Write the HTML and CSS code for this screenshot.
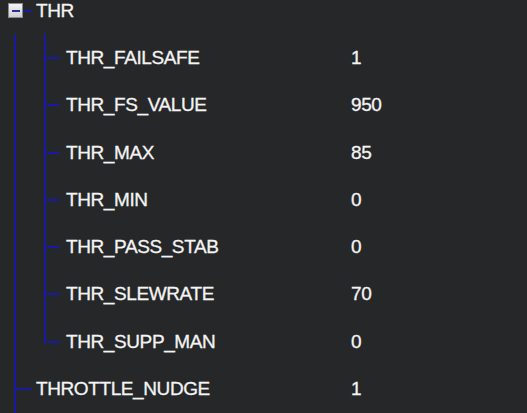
FILE: index.html
```html
<!DOCTYPE html>
<html>
<head>
<meta charset="utf-8">
<link rel="stylesheet" href="styles.css">
</head>
<body>
<div class="tree">
  <div class="root-row">
    <span class="toggle"><span class="minus"></span></span>
    <span class="root-link"></span>
    <span class="root-name">THR</span>
  </div>
  <div class="branch">
    <div class="children">
      <div class="row child"><span class="name">THR_FAILSAFE</span><span class="val">1</span></div>
      <div class="row child"><span class="name">THR_FS_VALUE</span><span class="val">950</span></div>
      <div class="row child"><span class="name">THR_MAX</span><span class="val">85</span></div>
      <div class="row child"><span class="name">THR_MIN</span><span class="val">0</span></div>
      <div class="row child"><span class="name">THR_PASS_STAB</span><span class="val">0</span></div>
      <div class="row child"><span class="name">THR_SLEWRATE</span><span class="val">70</span></div>
      <div class="row child"><span class="name">THR_SUPP_MAN</span><span class="val">0</span></div>
    </div>
    <div class="row top"><span class="name">THROTTLE_NUDGE</span><span class="val">1</span></div>
  </div>
</div>
</body>
</html>
```
FILE: styles.css
```css
html, body {
  margin: 0;
  padding: 0;
  background: #262729;
  height: 413px;
  overflow: hidden;
}
.tree {
  font-family: "Liberation Sans", Arial, sans-serif;
  font-size: 19px;
  letter-spacing: -0.4px;
  -webkit-text-stroke: 0.3px #f4f4f4;
  color: #f4f4f4;
  display: flex;
  flex-direction: column;
  height: 413px;
}
.root-row {
  height: 34.4px;
  display: flex;
  align-items: flex-start;
  padding-left: 8px;
  flex: none;
}
.toggle {
  width: 13px;
  height: 13px;
  margin-top: 3px;
  border: 1px solid #8a8a8a;
  background: linear-gradient(#f4f4f4, #cfcfcf);
  display: flex;
  align-items: center;
  justify-content: center;
}
.minus {
  width: 8px;
  height: 2px;
  background: #2233a0;
}
.root-link {
  width: 9px;
  height: 2px;
  margin-top: 10px;
  background: #1a1aa0;
}
.root-name {
  line-height: 22px;
  margin-left: 4px;
}
.branch {
  margin-left: 14px;
  border-left: 2px solid #1a1aa0;
  flex: 1;
}
.children {
  margin-left: 28px;
}
.row {
  height: 47.25px;
  display: flex;
  align-items: center;
  position: relative;
}
.child::before {
  content: "";
  position: absolute;
  left: 0;
  top: 0;
  bottom: 0;
  width: 2px;
  background: #1a1aa0;
}
.child:last-child::before {
  bottom: 50%;
}
.row::after {
  content: "";
  position: absolute;
  left: 0;
  top: 50%;
  width: 16px;
  height: 2px;
  margin-top: -1px;
  background: #1a1aa0;
}
.child .name {
  padding-left: 22px;
  width: 285px;
}
.top .name {
  padding-left: 20px;
  width: 315px;
}
.val {
  white-space: nowrap;
}
```
